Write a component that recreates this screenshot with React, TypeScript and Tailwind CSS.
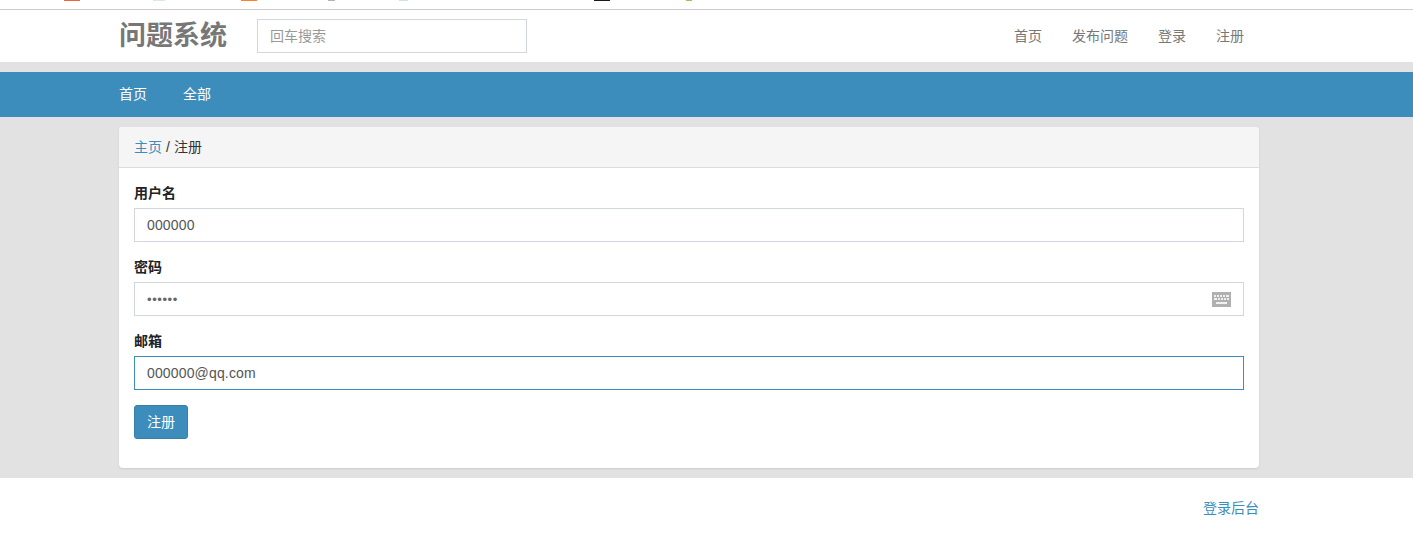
const tabIcons = [
  { ml: "ml-[64px]", w: "w-[16px]", bg: "bg-[#f0643c]" },
  { ml: "ml-[73px]", w: "w-[12px]", bg: "bg-[#d6e6f5]" },
  { ml: "ml-[76px]", w: "w-[16px]", bg: "bg-[#f58232]" },
  { ml: "ml-[71px]", w: "w-[7px]", bg: "bg-[#b4b4b4]" },
  { ml: "ml-[64px]", w: "w-[9px]", bg: "bg-[#cfe2ee]" },
  { ml: "ml-[186px]", w: "w-[16px]", bg: "bg-[#1a1a1a]" },
  { ml: "ml-[76px]", w: "w-[6px]", bg: "bg-[#8fce4a]" },
];

export default function App() {
  const font = "font-['Liberation_Sans','Noto_Sans_CJK_SC',sans-serif]";
  return (
    <div className={`${font} h-[551px] bg-white text-[14px] text-[#333] overflow-hidden`}>
      <div className="h-[10px] border-b border-[#ccc] flex items-start">
        {tabIcons.map((t, i) => (
          <span key={i} className={`${t.ml} ${t.w} ${t.bg} h-[1px] shrink-0`} />
        ))}
      </div>
      <header className="h-[52px] pl-[119px] pr-[169px] flex items-center justify-between">
        <div className="flex items-center">
          <span className="text-[27px] font-bold text-[#777] w-[138px] leading-none">问题系统</span>
          <input readOnly placeholder="回车搜索" className="w-[270px] h-[34px] px-3 border border-[#d2d6de] text-[14px] outline-none placeholder:text-[#999]" />
        </div>
        <nav className="flex gap-[30px] text-[#777]">
          <span>首页</span>
          <span>发布问题</span>
          <span>登录</span>
          <span>注册</span>
        </nav>
      </header>
      <div className="h-[10px] bg-[#e2e2e2]" />
      <div className="h-[45px] bg-[#3c8dbc] pl-[119px] flex items-center gap-[36px] text-white">
        <span>首页</span>
        <span>全部</span>
      </div>
      <main className="bg-[#e2e2e2] pt-[10px] pb-[10px] pl-[119px] pr-[154px]">
        <div className="bg-white rounded shadow-[0_1px_2px_rgba(0,0,0,0.1)] h-[341px]">
          <div className="h-[41px] bg-[#f5f5f5] border-b border-[#ddd] rounded-t px-[15px] flex items-center">
            <a className="text-[#3c8dbc]">主页</a>
            <span className="mx-1">/</span>
            <span>注册</span>
          </div>
          <form className="px-[15px] pt-[15px]">
            <label className="block font-bold leading-[20px] mb-[5px] text-[#222]">用户名</label>
            <input readOnly value="000000" className="block w-full h-[34px] px-3 border border-[#d2d6de] text-[14px] tracking-[0.15px] text-[#555] outline-none" />
            <label className="block font-bold leading-[20px] mt-[15px] mb-[5px] text-[#222]">密码</label>
            <div className="relative">
              <input readOnly type="password" value="000000" className="block w-full h-[34px] px-3 border border-[#d2d6de] text-[13px] tracking-[0.6px] text-[#666] outline-none" />
              <svg className="absolute right-[13px] top-[10px]" width="19" height="15" viewBox="0 0 19 15">
                <rect width="19" height="15" fill="#b0b0b0" />
                <path d="M2 3h2v2H2zM5 3h2v2H5zM8 3h2v2H8zM11 3h2v2h-2zM14 3h3v2h-3zM2 6h3v2H2zM6 6h2v2H6zM9 6h2v2H9zM12 6h2v2h-2zM15 6h2v2h-2zM4 10h11v2H4z" fill="#f0f0f0" />
              </svg>
            </div>
            <label className="block font-bold leading-[20px] mt-[15px] mb-[5px] text-[#222]">邮箱</label>
            <input readOnly value="000000@qq.com" className="block w-full h-[34px] px-3 border border-[#3c8dbc] text-[14px] tracking-[0.15px] text-[#555] outline-none" />
            <button type="button" className="block mt-[15px] h-[34px] w-[54px] bg-[#3c8dbc] border border-[#367fa9] rounded-[3px] text-white text-[14px]">注册</button>
          </form>
        </div>
      </main>
      <footer className="pr-[154px] pt-[20px] text-right text-[#3c8dbc]">登录后台</footer>
    </div>
  );
}
